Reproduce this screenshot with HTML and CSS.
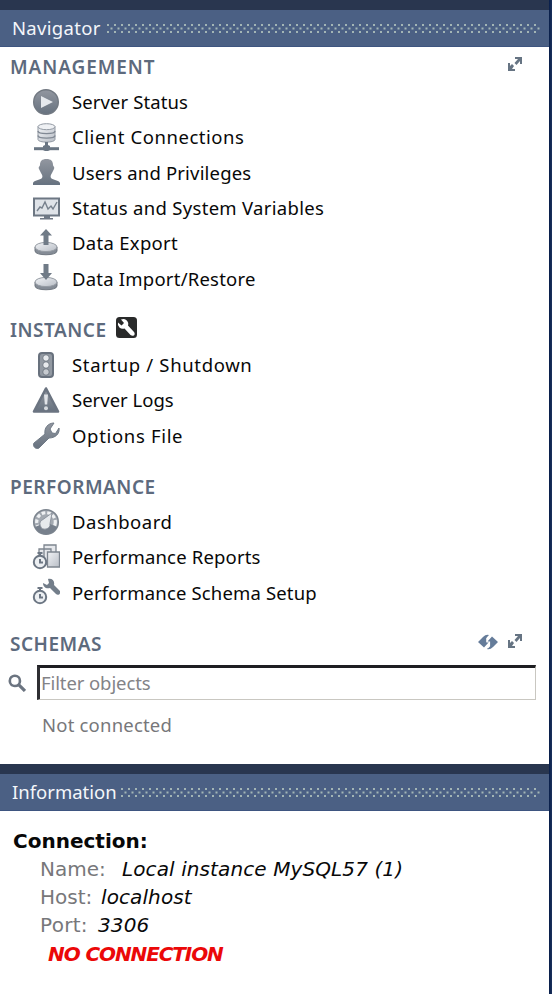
FILE: index.html
```html
<!DOCTYPE html>
<html lang="en">
<head>
<meta charset="utf-8">
<title>Navigator</title>
<link rel="stylesheet" href="styles.css">
</head>
<body>
<svg class="defs" width="0" height="0" aria-hidden="true">
  <defs>
    <linearGradient id="steel" x1="0" y1="0" x2="0" y2="1"><stop offset="0" stop-color="#9297a0"/><stop offset="1" stop-color="#67727f"/></linearGradient>
    <linearGradient id="pale" x1="0" y1="0" x2="1" y2="1"><stop offset="0" stop-color="#f1f3f6"/><stop offset="1" stop-color="#b9bec6"/></linearGradient>
    <pattern id="dots" width="7" height="12" patternUnits="userSpaceOnUse">
      <g fill="#a3b5b5"><rect x="0" y="1" width="2" height="2"/><rect x="3.5" y="4.5" width="2" height="2"/><rect x="0" y="8" width="2" height="2"/></g>
    </pattern>
    <symbol id="expand" viewBox="0 0 16 16"><g fill="#667483"><path d="M8 1h7v7h-2V5l-3.500 4L7.500 7 11 3H8z"/><path d="M1 7h2v3l2-2 2 2-2 3h3v2H1z"/></g></symbol>
    <symbol id="disk" viewBox="0 0 28 28"><path d="M3 18v4c0 5 22 5 22 0v-4z" fill="#858c96" stroke="#707780"/><ellipse cx="14" cy="18" rx="11" ry="4.6" fill="url(#pale)" stroke="#969ca4"/></symbol>
    <symbol id="watch" viewBox="0 0 28 28"><circle cx="8" cy="19" r="6.2" fill="#eceff2" stroke="#6c7683" stroke-width="2"/><path d="M5.5 10h5M8 10v3M8 16v3.5h3" fill="none" stroke="#6c7683" stroke-width="2"/></symbol>
  </defs>
</svg>
<div class="window">
  <main class="content">
    <section class="navigator">
      <header class="bar"><h1 class="title-nav">Navigator</h1><svg class="grip grip-nav"><rect width="100%" height="12" fill="url(#dots)"/></svg></header>
      <div class="group management">
        <div class="heading"><h2>MANAGEMENT</h2><svg class="expand"><use href="#expand"/></svg></div>
        <ul>
          <li><svg viewBox="0 0 28 28"><circle cx="14" cy="14" r="12.3" fill="url(#steel)" stroke="#727982" stroke-width="1.4"/><path d="M9 8v12l12-6z" fill="#e6e9ed"/></svg><span class="t1">Server Status</span></li>
          <li><svg viewBox="0 0 28 28"><path d="M6 3.5v13c0 3.500 17 3.500 17 0v-13" fill="url(#pale)" stroke="#9299a3"/><ellipse cx="14.5" cy="3.7" rx="8.5" ry="3" fill="#eff1f4" stroke="#9299a3"/><path d="M6 8c0 3.500 17 3.500 17 0M6 12.500c0 3.500 17 3.500 17 0" fill="none" stroke="#818994" stroke-width="1.4"/><path d="M2 24.200h25v3H2z" fill="#6a7683"/><path d="M13 19h3v3l2 1v4l-2 1h-3l-2-1v-4l2-1z" fill="#6a7683"/></svg><span class="t2">Client Connections</span></li>
          <li><svg viewBox="0 0 28 28"><path d="M1 27v-2c1-3 7-3 9-5 1-2 0-3-1-5L7 11c-1-2 1-3 1-4C8 3 10 1 14.5 1S21 3 21 7c0 1 2 2 1 4l-2 4c-1 2-2 3-1 5 2 2 8 2 9 5v2z" fill="url(#steel)"/><path d="M1 25h27v2H1z" fill="#687482"/></svg><span class="t3">Users and Privileges</span></li>
          <li><svg viewBox="0 0 28 28"><path d="M2 4.500h25v17H2z" fill="#dfe3e8" stroke="#6d7783" stroke-width="2"/><path d="M5 17l3-4 2 1 3-6 3 7 3-3 2 3 4-7" fill="none" stroke="#77818d" stroke-width="1.4"/><path d="M12 22h6v2h3v1.500H8V24h4z" fill="#707986"/></svg><span class="t4">Status and System Variables</span></li>
          <li><svg viewBox="0 0 28 28"><use href="#disk"/><path d="M14 0l6 6.5h-3.5V16h-5V6.5H8z" fill="#707b87"/></svg><span class="t5">Data Export</span></li>
          <li><svg viewBox="0 0 28 28"><use href="#disk"/><path d="M11.5 0h5v9H20l-6 7-6-7h3.5z" fill="#707b87"/></svg><span class="t6">Data Import/Restore</span></li>
        </ul>
      </div>
      <div class="group instance">
        <div class="heading"><h2>INSTANCE</h2><svg class="badge" viewBox="0 0 21 21"><rect width="21" height="21" rx="3.5" fill="#292a2a"/><path d="M5 2.5a5 5 0 0 1 7 6l6 6.5c2 3-1 5-3.5 3L8.5 11.500a5 5 0 0 1-6.500-6l3.500 3 2.500-2.500z" fill="#fff"/></svg></div>
        <ul>
          <li><svg viewBox="0 0 28 28"><rect x="7" y="2" width="14" height="24" rx="3" fill="#9299a2" stroke="#68717d" stroke-width="2"/><g fill="#e7eaed" stroke="#737b85"><circle cx="14" cy="7" r="3.300"/><circle cx="14" cy="14" r="3.300"/><circle cx="14" cy="21" r="3.300" fill="#c7cbd0"/></g></svg><span class="t7">Startup / Shutdown</span></li>
          <li><svg viewBox="0 0 28 28"><path d="M14 2.500L26 25.500H2z" fill="url(#steel)" stroke="#6b7481" stroke-width="2.600" stroke-linejoin="round"/><path d="M12 8.500h4l-.8 10h-2.400z" fill="#e1e4e8"/><circle cx="14" cy="22.200" r="2" fill="#d5d9dd"/></svg><span class="t8">Server Logs</span></li>
          <li><svg viewBox="0 0 28 28"><path d="M2 22l11-9c-1-6 3-11 9-11l-4 6 2 4 3.500.5L27 7c1 6-4 10-10 10L7 27c-3 2-7-2-5-5z" fill="url(#steel)" stroke="#707a86"/></svg><span class="t9">Options File</span></li>
        </ul>
      </div>
      <div class="group performance">
        <div class="heading"><h2>PERFORMANCE</h2></div>
        <ul>
          <li><svg viewBox="0 0 28 28"><circle cx="14" cy="14" r="12.300" fill="#a3a9b1" stroke="#7d858f" stroke-width="1.500"/><circle cx="14" cy="14" r="9.300" fill="none" stroke="#eff1f3" stroke-width="3.200" stroke-dasharray="3.600 2"/><path d="M3 19a12 12 0 0 0 22 0l-7-3-8 0z" fill="#77808c"/><path d="M20 5L11 11.500a5 5 0 1 0 7 4z" fill="#e7eaed" stroke="#818994" stroke-width=".8"/></svg><span class="t10">Dashboard</span></li>
          <li><svg viewBox="0 0 28 28"><g fill="#e6e8ec" stroke="#7d858f" stroke-width="1.300"><path d="M12 2h12v16H12zM7 6h12v15H7z"/><path d="M15.500 9h12v15h-12z" fill="url(#pale)"/></g><use href="#watch"/></svg><span class="t11">Performance Reports</span></li>
          <li><svg viewBox="0 0 28 28"><use href="#watch"/><path d="M16 1c4-1 7 2 6 6l6 6c1 3-2 5-4 3l-6-6c-4 1-7-1-7-5l4 2 2-2z" fill="#737e8a"/></svg><span class="t12">Performance Schema Setup</span></li>
        </ul>
      </div>
      <div class="group schemas">
        <div class="heading"><h2>SCHEMAS</h2><svg class="refresh" viewBox="0 0 20 16"><path d="M0 8l5-5q3-3 6-2L8.500 4v4H11l-5 5.500zM20 8l-5 5q-3 3-6 2l2.500-3V8H9l5-5.500z" fill="#657c9a"/><path d="M11 2L9 4.500V8h2.500v4L9.500 14" fill="none" stroke="#fff" stroke-width="1.200"/></svg><svg class="expand"><use href="#expand"/></svg></div>
        <div class="search"><svg viewBox="0 0 17 17"><circle cx="6.500" cy="6.500" r="4.800" fill="none" stroke="#6b7480" stroke-width="2.500"/><path d="M10 10l6 6" stroke="#6b7480" stroke-width="3"/></svg><input type="text" placeholder="Filter objects" aria-label="Filter objects"></div>
        <p class="empty">Not connected</p>
      </div>
    </section>
    <section class="information">
      <header class="bar"><h1 class="title-info">Information</h1><svg class="grip grip-info"><rect width="100%" height="12" fill="url(#dots)"/></svg></header>
      <div class="details">
        <h3>Connection:</h3>
        <p class="name"><span>Name:</span><em>Local instance MySQL57 (1)</em></p>
        <p class="host"><span>Host:</span><em>localhost</em></p>
        <p class="port"><span>Port:</span><em>3306</em></p>
        <strong>NO CONNECTION</strong>
      </div>
    </section>
  </main>
</div>
</body>
</html>
```
FILE: styles.css
```css
* { box-sizing: border-box; }
body, h1, h2, h3, p, ul { margin: 0; padding: 0; }
body { font-family: "Noto Sans", sans-serif; font-size: 18.5px; color: #080808; }
.defs { display: block; position: absolute; }
.window { width: 552px; height: 994px; overflow: hidden; background: linear-gradient(90deg, #071d49, #1b315c) right / 3px 100% no-repeat; }
.content { width: 549px; height: 994px; background: #fff; }
.navigator { height: 764px; }
.bar { height: 47px; border-top: 10px solid #29364f; background: #4b6084; border-bottom: 1px solid #3e5580; display: flex; align-items: center; color: #f4f6fa; padding: 0 8px 0 12px; }
.bar h1 { font-size: 18.5px; font-weight: 400; line-height: 36px; white-space: nowrap; }
.title-nav { width: 95px; letter-spacing: .3px; }
.title-info { width: 109px; }
.grip { flex: 1; min-width: 0; height: 12px; margin-top: 1px; }
.heading { display: flex; align-items: center; height: 37px; padding: 1px 26px 0 10px; }
h2 { font-size: 19px; font-weight: 600; color: #5d6a7d; line-height: 36px; letter-spacing: .5px; margin-top: 1px; }
.management h2 { letter-spacing: .9px; }
ul { list-style: none; }
li { display: flex; align-items: center; height: 35.33px; padding-left: 32px; }
li svg { width: 28px; height: 28px; margin-right: 12px; flex: none; }
li span { white-space: nowrap; line-height: 35px; }
.t1 { letter-spacing: .1px; }
.t2 { letter-spacing: .55px; }
.t3 { letter-spacing: .18px; }
.t4 { letter-spacing: .3px; }
.t5 { letter-spacing: .3px; }
.t6 { letter-spacing: .22px; }
.t7 { letter-spacing: .65px; }
.t9 { letter-spacing: .67px; }
.t10 { letter-spacing: .5px; }
.t11 { letter-spacing: .17px; }
.t12 { letter-spacing: .15px; }
.group { height: 263px; }
.instance { height: 157px; }
.performance { height: 157px; }
.schemas { height: 140px; }
.expand { width: 16px; height: 16px; margin-left: auto; margin-top: -5px; }
.badge { width: 21px; height: 21px; margin: -3px 0 0 9px; }
.refresh { width: 20px; height: 16px; margin: -3px 9px 0 auto; }
.refresh + .expand { margin-left: 0; }
.search { display: flex; align-items: center; padding: 0 13px 0 8px; margin-top: 4px; }
.search svg { width: 18px; height: 18px; margin-right: 11px; flex: none; }
.search input { flex: 1; min-width: 0; height: 35px; border: 1px solid #c9c7c1; border-top: 3px solid #1e1e22; border-left: 3px solid #2e2e32; background: #fff; padding: 0 1px 2px; font: 18.5px "Noto Sans", sans-serif; letter-spacing: -.1px; outline: none; }
.search input::placeholder { color: #838387; opacity: 1; }
.empty { color: #77777a; padding-left: 42px; line-height: 49px; letter-spacing: .2px; }
.information .details { padding: 16px 0 0 13px; font-family: "DejaVu Sans", sans-serif; font-size: 20px; line-height: 28.2px; white-space: nowrap; }
.details h3 { font-size: 20px; line-height: 28px; font-weight: 700; }
.details p { display: flex; padding-left: 27px; }
.details p span { width: 82px; color: #77777a; }
.details .host span { width: 61px; }
.details .port span { width: 58px; letter-spacing: .3px; }
.details em { letter-spacing: .1px; }
.details strong { display: block; padding-left: 35px; font-style: italic; color: #eb0808; letter-spacing: -1.1px; }
```
